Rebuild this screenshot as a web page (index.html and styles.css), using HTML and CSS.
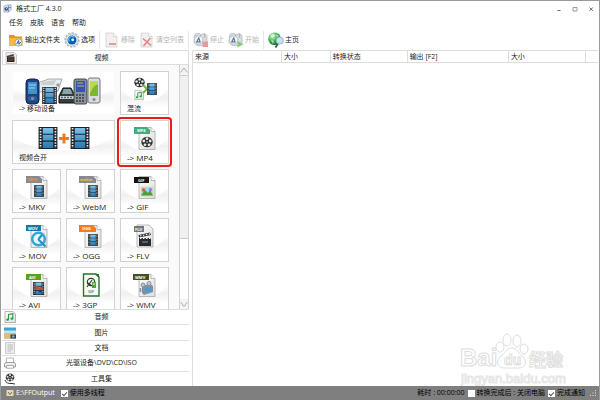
FILE: index.html
```html
<!DOCTYPE html>
<html lang="zh-CN">
<head>
<meta charset="utf-8">
<title>格式工厂 4.3.0</title>
<link rel="stylesheet" href="styles.css">
</head>
<body>
<svg class="defs" aria-hidden="true">
  <defs>
    <linearGradient id="blue" x1="0" y1="0" x2="0" y2="1"><stop offset="0" stop-color="#7cc4e8"/><stop offset="1" stop-color="#2478b4"/></linearGradient>
    <linearGradient id="paper" x1="0" y1="0" x2="1" y2="1"><stop offset="0" stop-color="#ffffff"/><stop offset="1" stop-color="#dcdcdc"/></linearGradient>
    <radialGradient id="globe" cx=".35" cy=".3" r=".8"><stop offset="0" stop-color="#d4f8d0"/><stop offset=".5" stop-color="#3cb04a"/><stop offset="1" stop-color="#0b6424"/></radialGradient>
    <symbol id="film" viewBox="0 0 18 21">
      <rect width="18" height="21" fill="#1c2226"/>
      <path d="M1.900 1V20M16.100 1V20" stroke="#e8eef2" stroke-width="1.600" stroke-dasharray="1.500 1.200"/>
      <path d="M4 1h10v5.500H4zM4 7.500h10v5.500H4zM4 14h10v6H4z" fill="url(#blue)"/>
    </symbol>
    <symbol id="page" viewBox="0 0 24 24">
      <path d="M6 1.500H18L22 5.500V23.500H6Z" fill="url(#paper)" stroke="#a8a8a8" stroke-width=".8"/>
      <path d="M18 1.500V5.500H22" fill="#fff" stroke="#a8a8a8" stroke-width=".8"/>
    </symbol>
    <symbol id="reel" viewBox="0 0 12 12">
      <ellipse cx="6" cy="6" rx="5.700" ry="5.300" fill="#2e3030"/>
      <g fill="#e4e6e6"><circle cx="6" cy="2.700" r="1.400"/><circle cx="9.200" cy="5" r="1.400"/><circle cx="8" cy="8.800" r="1.400"/><circle cx="4" cy="8.800" r="1.400"/><circle cx="2.800" cy="5" r="1.400"/></g>
      <circle cx="6" cy="6" r=".7" fill="#fff"/>
    </symbol>
    <symbol id="notes" viewBox="0 0 12 12">
      <path d="M1 .5H9L11.500 3V11.500H1Z" fill="url(#paper)" stroke="#9a9a9a" stroke-width=".7"/>
      <path d="M4.500 8.500V3.500L8.800 2.600V7.500" fill="none" stroke="#23a03a" stroke-width="1.100"/>
      <ellipse cx="3.600" cy="8.700" rx="1.400" ry="1.100" fill="#23a03a"/><ellipse cx="7.900" cy="7.700" rx="1.400" ry="1.100" fill="#23a03a"/>
    </symbol>
    <symbol id="factory" viewBox="0 0 16 16">
      <path d="M1.500 4L3 1.500H7L8 3L12.500 1.500L15 4V12L11 14.500H4L1 11Z" fill="#d3d8dd" stroke="#a0a8b0" stroke-width=".7"/>
      <path d="M8 3V7M3 3.500L4 5.500M12.500 2V6" fill="none" stroke="#7b858f" stroke-width=".8"/>
      <circle cx="6" cy="8.500" r="4.300" fill="#f2f5f8" stroke="#a4aeb8" stroke-width=".8"/>
      <path d="M6.500 5.500L4 10.500H7.500L6.500 7" fill="none" stroke="#3c5c86" stroke-width="1.300"/>
    </symbol>
  </defs>
</svg>

<header class="titlebar">
  <svg class="app-icon" viewBox="0 0 10 9"><path d="M1 2L4 .5H9V6L6.500 8.500H1Z" fill="#dce3ee" stroke="#8d98ad" stroke-width=".7"/><path d="M6 1V8M6 3.500H9" stroke="#56657f" stroke-width=".8"/><circle cx="3.600" cy="5" r="2" fill="#2b4c8c"/><circle cx="4" cy="4.700" r=".7" fill="#bcd8f8"/></svg>
  <h1>格式工厂 4.3.0</h1>
  <div class="window-buttons">
    <button aria-label="最小化"><svg viewBox="0 0 6 6"><path d="M1.500 4.500H4.500" stroke="#444" stroke-width=".8"/></svg></button>
    <button aria-label="最大化"><svg viewBox="0 0 6 6"><path d="M1 1.500H5V5H1Z" fill="none" stroke="#777" stroke-width=".7"/></svg></button>
    <button aria-label="关闭"><svg viewBox="0 0 6 6"><path d="M1.500 1.500L4.800 4.800M4.800 1.500L1.500 4.800" stroke="#444" stroke-width=".8"/></svg></button>
  </div>
</header>

<nav class="menu"><button>任务</button><button>皮肤</button><button>语言</button><button>帮助</button></nav>

<div class="toolbar">
  <button class="tool"><svg class="tool-icon" viewBox="0 0 16 16"><path d="M1 3H6L7.500 4.500H14V14H1Z" fill="#d89a1c"/><path d="M1 6H14.500V14H1Z" fill="#f5bb3c"/><circle cx="10.500" cy="10.500" r="3.600" fill="#e8edf2" stroke="#8998a8" stroke-width=".8"/><path d="M8.700 12L10.500 8.500L11 12.300L12.700 10" stroke="#35668c" fill="none"/></svg>输出文件夹</button>
  <button class="tool"><svg class="tool-icon" viewBox="0 0 16 16"><circle cx="8" cy="8" r="6.800" fill="#e7eaed" stroke="#b4bcc4" stroke-width="1.800" stroke-dasharray="2.200 1.300"/><circle cx="8" cy="8" r="6" fill="#eef1f4" stroke="#a2adb8" stroke-width=".5"/><circle cx="8" cy="8" r="4.500" fill="#075fb5"/><path d="M5.500 9.500A3 3 0 0 1 10 5.500" fill="none" stroke="#5ab4ee" stroke-width="1.300"/><circle cx="8.700" cy="7.800" r="1.400" fill="#fff"/></svg>选项</button>
  <span class="divider"></span>
  <button class="tool off" disabled><svg class="tool-icon" viewBox="0 0 16 16"><path d="M2 1H9.500L13 4.500V15H2Z" fill="#eee" stroke="#c8c8c8" stroke-width=".8"/><path d="M9.500 1V4.500H13" fill="#fff" stroke="#c8c8c8" stroke-width=".8"/><path d="M5 12H12" stroke="#dc7474" stroke-width="1.600"/></svg>移除</button>
  <button class="tool off" disabled><svg class="tool-icon" viewBox="0 0 16 16"><path d="M2 1H9.500L13 4.500V15H2Z" fill="#eee" stroke="#c8c8c8" stroke-width=".8"/><path d="M9.500 1V4.500H13" fill="#fff" stroke="#c8c8c8" stroke-width=".8"/><path d="M4 6.500L12 13.500M11.500 6L4.500 14" stroke="#dc6c6c" stroke-width="1.500"/></svg>清空列表</button>
  <span class="divider"></span>
  <button class="tool off" disabled><svg class="tool-icon" viewBox="0 0 16 16"><use href="#factory" width="15" height="15"/><path d="M9.500 9.500H15V15H9.500Z" fill="#e58a8a"/></svg>停止</button>
  <button class="tool off" disabled><svg class="tool-icon" viewBox="0 0 16 16"><use href="#factory" width="15" height="15"/><path d="M9.500 9L15.500 12.200L9.500 15.500Z" fill="#6cc65c"/></svg>开始</button>
  <span class="divider"></span>
  <button class="tool"><svg class="tool-icon" viewBox="0 0 16 16"><circle cx="6.500" cy="6.800" r="6.300" fill="url(#globe)"/><path d="M2.500 3L5 1.500L7 3L5.500 5L3.500 5.500ZM8 2L11 4L9 5ZM3 8L6 9L5 12Z" fill="#e6fae4" opacity=".7"/><path d="M10 11.500L7.500 15.500" stroke="#3a5a44" stroke-width="1.700"/><circle cx="11.800" cy="8.500" r="3.600" fill="#c2e3f5" stroke="#8caabd" stroke-width=".8"/></svg>主页</button>
</div>

<main class="workspace">
  <aside class="sidebar">
    <button class="section"><svg viewBox="0 0 12 12"><path d="M1 .5H9L11.500 3V11.500H1Z" fill="#eee" stroke="#aaa" stroke-width=".6"/><path d="M2 4.500H9.500V10H2Z" fill="#30241e"/><path d="M1.500 4L8.500 2L9 3.700L2 5.200Z" fill="#4b4039"/><path d="M3 6H8.500M3 8H8.500" stroke="#9b7965" stroke-width=".6"/></svg><span>视频</span></button>
    <div class="library">
      <div class="tiles">
        <button class="tile wide plain">
          <svg class="phones" viewBox="0 0 78 28">
            <path d="M12 6L24 2H37L33 14L13 15Z" fill="#e8eaed" stroke="#999" stroke-width=".8"/><path d="M17 5L31 3L29 8H16Z" fill="#c8ced2"/><circle cx="33" cy="8" r="1.800" fill="#9aa4aa"/>
            <rect x="1" y="2" width="13" height="25" rx="4" fill="#1c4383" stroke="#10264d"/><rect x="3" y="5" width="9" height="12" fill="#3f8fd0"/><path d="M4 8H11M4 11H10" stroke="#9bdcf2"/><path d="M4 13L9 15" stroke="#63b24c"/><rect x="3" y="19" width="9" height="5" rx="2" fill="#31588f"/><circle cx="7.500" cy="21.500" r="1.600" fill="#7790b8"/>
            <path d="M34 19L38 11H46L50 19V26H34Z" fill="#343c40" stroke="#111"/><path d="M38.500 12H45.500L47.500 17H37Z" fill="#87a5ab"/><path d="M35 19H49V22H35Z" fill="#ccd3d5"/><path d="M36 20.500H48" stroke="#61696e" stroke-width="1.500" stroke-dasharray="2 1"/>
            <rect x="49" y="2" width="13" height="25" rx="2" fill="#8a9198" stroke="#43474c"/><rect x="51" y="4" width="9" height="11" fill="#2f56b4"/><path d="M52 6H58M52 9H59" stroke="#e6ad54"/><path d="M51 18H60M51 21H60M51 24H60" stroke="#363c43" stroke-width="1.500" stroke-dasharray="2 1"/>
            <rect x="63" y="1" width="12" height="25" rx="2" fill="#d9dce0" stroke="#777"/><rect x="65" y="4" width="8" height="15" fill="#7fb530"/><path d="M65 16Q70 6 73 8V4H65Z" fill="#b6d957"/><circle cx="69" cy="22.500" r="1.600" fill="#858d94"/>
            <use href="#film" x="17" y="10" width="15" height="17"/>
          </svg>
          <span>-&gt; 移动设备</span>
        </button>
        <button class="tile"><svg class="format-icon" viewBox="0 0 24 24"><use href="#reel" x="1" y="0" width="11" height="11"/><use href="#notes" x="1" y="12" width="10" height="12"/><path d="M10 8L14 12M10 16L14 12M12 12H15" stroke="#72bb35" stroke-width="2" fill="none"/><use href="#film" x="14" y="6" width="10" height="12"/></svg><span>混流</span></button>
        <button class="tile wide"><svg class="merge-icon" viewBox="0 0 50 24"><use href="#film" x="-1" y="1" width="20" height="22"/><path d="M20 12.500H30M25 7.500V17.500" stroke="#ee7d20" stroke-width="3"/><use href="#film" x="31" y="1" width="20" height="22"/></svg><span>视频合开</span></button>
        <button class="tile format marked"><svg class="format-icon" viewBox="0 0 24 24"><use href="#page" width="24" height="24"/><path d="M1 1H14L17 4V8H1Z" fill="#46a982"/><text class="tag" x="4" y="6">MP4</text><use href="#reel" x="8" y="10" width="12" height="12"/></svg><span>-&gt; MP4</span></button>
        <button class="tile format"><svg class="format-icon" viewBox="0 0 24 24"><use href="#page" width="24" height="24"/><path d="M1 1H14L17 4V8H1Z" fill="#858b91"/><text class="tag orange" x="3" y="6">MKV</text><use href="#film" x="9" y="10" width="10" height="12"/></svg><span>-&gt; MKV</span></button>
        <button class="tile format"><svg class="format-icon" viewBox="0 0 24 24"><use href="#page" width="24" height="24"/><path d="M0 1H14L17 4V8H0Z" fill="#858b91"/><text class="tag yellow" x="1" y="6">webm</text><use href="#film" x="9" y="10" width="10" height="12"/></svg><span>-&gt; WebM</span></button>
        <button class="tile format"><svg class="format-icon" viewBox="0 0 24 24"><use href="#page" width="24" height="24"/><path d="M1 2H16V8H1Z" fill="#151515"/><text class="tag" x="5" y="7">GIF</text><path d="M8 12H20V21H8Z" fill="#9cd8f5" stroke="#e9d79a" stroke-width=".8"/><path d="M8 20.500L12 15L15 18L17 15L20 20.500Z" fill="#539d32"/><circle cx="10.500" cy="15" r="1.700" fill="#e65a30"/><circle cx="17.500" cy="14.500" r="1.500" fill="#7882dc"/></svg><span>-&gt; GIF</span></button>
        <button class="tile format"><svg class="format-icon" viewBox="0 0 24 24"><use href="#page" width="24" height="24"/><path d="M1 1H16V7H1Z" fill="#1677a8"/><text class="tag" x="3" y="6">MOV</text><circle cx="13.500" cy="15" r="6.300" fill="#e8f7fd" stroke="#38a5d4" stroke-width="2.500"/><path d="M13.500 15L17 11M13 15L20.500 22.500" stroke="#2293ca" stroke-width="2.200"/></svg><span>-&gt; MOV</span></button>
        <button class="tile format"><svg class="format-icon" viewBox="0 0 24 24"><use href="#page" width="24" height="24"/><path d="M0 1H14L17 4V8H0Z" fill="#f37b20"/><text class="tag" x="3" y="6">OGG</text><use href="#film" x="9" y="10" width="10" height="12"/></svg><span>-&gt; OGG</span></button>
        <button class="tile format"><svg class="format-icon" viewBox="0 0 24 24"><path d="M4 1H16L20 5V23H4Z" fill="url(#paper)" stroke="#a8a8a8" stroke-width=".8"/><path d="M1 2H11V8H1Z" fill="#71777b"/><text class="tag" x="2" y="7">FLV</text><path d="M6 14H18V22H6Z" fill="#272b2d"/><path d="M5.500 11L17 8.500L18 11L6 13.500Z" fill="#282b2d"/><path d="M7 12L17 9.800M7 14.500H18" stroke="#fff" stroke-width="1.200" stroke-dasharray="1.500 1.500"/><path d="M9 17H15V19H9Z" fill="#596167"/></svg><span>-&gt; FLV</span></button>
        <button class="tile format"><svg class="format-icon" viewBox="0 0 24 24"><use href="#page" width="24" height="24"/><path d="M1 1H16V7H1Z" fill="#58a51a"/><text class="tag" x="4" y="6">AVI</text><use href="#film" x="7" y="9" width="13" height="13"/><path d="M10 14L13 12L14 15L17 14V17L14 16L11 17Z" fill="#d0472c"/><circle cx="15" cy="18" r="1.500" fill="#1d3e68"/></svg><span>-&gt; AVI</span></button>
        <button class="tile format"><svg class="format-icon" viewBox="0 0 24 24"><path d="M4.500 1H17L20 4V23H4.500Z" fill="#f4faf4" stroke="#24762d" stroke-width="1.400"/><path d="M16 1L20 5V1Z" fill="#24762d"/><circle cx="12" cy="9" r="3.700" fill="none" stroke="#2b3e30" stroke-width="1.200"/><path d="M8 14L13 7M9 10L13 13" fill="none" stroke="#2b3e30" stroke-width="1.200"/><rect x="13" y="9" width="4" height="6" fill="#5aa044"/><circle cx="15" cy="11" r="1" fill="#cce778"/><text class="tag small" x="9" y="20">3GP</text></svg><span>-&gt; 3GP</span></button>
        <button class="tile format"><svg class="format-icon" viewBox="0 0 24 24"><use href="#page" width="24" height="24"/><path d="M0 1H16V7H0Z" fill="#46501c"/><text class="tag" x="2" y="6">WMV</text><path d="M9 13L17 11L20 13V19L11 22L9 20Z" fill="#8290a0"/><circle cx="10" cy="12" r="2" fill="#b8c3cc" stroke="#85929e"/><circle cx="16" cy="10.500" r="2" fill="#c6ced4" stroke="#85929e"/><path d="M12 15L18 14V18L12 19Z" fill="#4b9ad4"/><path d="M7.500 15V19" stroke="#8290a0" stroke-width="1.600"/></svg><span>-&gt; WMV</span></button>
      </div>
      <div class="scrollbar">
        <button aria-label="向上滚动"><svg viewBox="0 0 8 10"><path d="M.5 7.500L4 3L7.500 7.500" fill="none" stroke="#999" stroke-width=".8"/></svg></button>
        <div class="track"><div class="thumb"></div></div>
        <button aria-label="向下滚动"><svg viewBox="0 0 8 10"><path d="M.5 3L4 7.500L7.500 3" fill="none" stroke="#999" stroke-width=".8"/></svg></button>
      </div>
    </div>
    <div class="sections">
      <button class="section"><svg viewBox="0 0 12 12"><use href="#notes" width="12" height="12"/></svg><span>音频</span></button>
      <button class="section"><svg viewBox="0 0 12 12"><path d="M0 .5H12V11.500H0Z" fill="#3fa4dc"/><path d="M0 3.500H12V6H0Z" fill="#bfe4f4"/><path d="M0 6H12V11.500H0Z" fill="#dfbc7c"/><path d="M6.500 7.500H12V11.500H6.500Z" fill="#30434f"/><circle cx="9.200" cy="9.500" r="1.300" fill="#92aab5"/></svg><span>图片</span></button>
      <button class="section"><svg viewBox="0 0 12 12"><path d="M1.500 .5H10.500V11.500H1.500Z" fill="#ececec" stroke="#b2b2b2" stroke-width=".6"/><path d="M3.500 3H9M3.500 5H9M3.500 7H9M3.500 9H7" stroke="#aaa" stroke-width=".7"/></svg><span>文档</span></button>
      <button class="section"><svg viewBox="0 0 12 12"><path d="M2.500 6V1H9.500V6" fill="#fff" stroke="#999" stroke-width=".7"/><path d="M1.500 5.500H10.500L11.500 7V10H.5V7Z" fill="#eee" stroke="#888" stroke-width=".8"/><path d="M2.500 8.500H9.500V11.200H2.500Z" fill="#fff" stroke="#888" stroke-width=".7"/></svg><span>光驱设备\DVD\CD\ISO</span></button>
      <button class="section"><svg viewBox="0 0 12 12"><use href="#reel" x="1" y="0" width="10" height="9"/><path d="M1 7Q2 11 8 10.500L11 11" fill="none" stroke="#333"/></svg><span>工具集</span></button>
    </div>
  </aside>

  <section class="jobs">
    <table>
      <colgroup><col class="col-source"><col class="col-size"><col class="col-state"><col class="col-output"><col class="col-result"><col></colgroup>
      <thead><tr><th>来源</th><th>大小</th><th>转换状态</th><th>输出 [F2]</th><th>大小</th><th></th></tr></thead>
      <tbody></tbody>
    </table>
    <svg class="watermark" viewBox="0 0 112 56">
      <text class="wm-brand" x="1" y="36">Bai</text>
      <ellipse cx="41" cy="17" rx="4" ry="5"/><ellipse cx="48" cy="10" rx="4" ry="6"/><ellipse cx="58" cy="11" rx="4" ry="6"/><ellipse cx="65" cy="19" rx="4" ry="5"/><path d="M53 18C58 18 60 24 64 27C69 32 66 38 60 38H45C39 38 36 32 41 27C46 23 48 18 53 18Z"/>
      <text class="wm-du" x="45" y="35">du</text>
      <text class="wm-cn" x="70" y="36">经验</text>
      <text class="wm-url" x="2" y="53">jingyan.baidu.com</text>
    </svg>
  </section>
</main>

<footer class="status">
  <button class="path"><svg viewBox="0 0 8 8"><path d="M.5 1H7.500V7H.5Z" fill="#ecd8a4"/><path d="M2 3L4 5.500L6 3" fill="none" stroke="#5d6e89"/></svg>E:\FFOutput</button>
  <label><input type="checkbox" checked>使用多线程</label>
  <div class="status-end">
    <span>耗时 : 00:00:00</span>
    <label><input type="checkbox">转换完成后 : 关闭电脑</label>
    <label><input type="checkbox" checked>完成通知</label>
    <svg class="grip" viewBox="0 0 7 7"><path d="M5 0H6V1H5ZM5 2.500H6V3.500H5ZM5 5H6V6H5ZM2.500 2.500H3.500V3.500H2.500ZM2.500 5H3.500V6H2.500ZM0 5H1V6H0Z" fill="#ddd"/></svg>
  </div>
</footer>
</body>
</html>
```
FILE: styles.css
```css
* { box-sizing: border-box; }

body {
  margin: 0;
  height: 100vh;
  display: flex;
  flex-direction: column;
  overflow: hidden;
  border: 1px solid #9a9a9a;
  border-bottom: 0;
  background: #fff;
  color: #1c1c1c;
  font: 7px/10px "Open Sans", "Noto Sans CJK SC", sans-serif;
}

button {
  margin: 0;
  padding: 0;
  border: 0;
  background: none;
  color: inherit;
  font: inherit;
}

svg { display: block; flex: none; }
.defs { position: absolute; width: 0; height: 0; }

.titlebar {
  flex: none;
  display: flex;
  align-items: center;
  height: 15px;
  padding: 0 5px 0 2px;
}
.titlebar h1 { margin: 0 0 0 4px; font: inherit; }
.app-icon { width: 9px; height: 9px; }
.window-buttons { display: flex; gap: 10px; margin-left: auto; }
.window-buttons svg { width: 6px; height: 6px; }

.menu {
  flex: none;
  display: flex;
  align-items: center;
  gap: 7px;
  height: 13px;
  padding-left: 8px;
}

.toolbar {
  flex: none;
  display: flex;
  align-items: center;
  gap: 4px;
  height: 21px;
  padding-left: 7px;
}
.tool { display: flex; align-items: center; gap: 1px; white-space: nowrap; }
.tool-icon { width: 16px; height: 16px; }
.off { color: #b4b4b4; }
.off .tool-icon { opacity: .85; }
.divider { width: 1px; height: 18px; background: #e8e8e8; }

.workspace { flex: 1; min-height: 0; display: flex; gap: 3px; padding: 0 1px; }

.sidebar {
  flex: none;
  width: 187px;
  display: flex;
  flex-direction: column;
}
.section {
  flex: none;
  display: flex;
  align-items: center;
  width: 100%;
  height: 15px;
  padding: 0 2px;
  border: 1px solid #ddd;
  background: #fff;
}
.section svg { width: 12px; height: 12px; }
.section span { flex: 1; text-align: center; }
.sections {
  flex: none;
  height: 77px;
  display: grid;
  grid-template-rows: repeat(5, 1fr);
}
.sections .section { height: auto; border-width: 1px 0 0; }

.library {
  flex: 1;
  min-height: 0;
  display: flex;
  justify-content: space-between;
  overflow: hidden;
  background: #fafafa;
}
.tiles {
  display: grid;
  grid-template-columns: repeat(3, 49px);
  grid-auto-rows: 44px;
  gap: 5px;
  padding: 6px 0 0 10px;
}
.tile {
  display: flex;
  flex-direction: column;
  align-items: center;
  gap: 3px;
  padding-top: 5px;
  border: 1px solid #d2d2d2;
  background:
    radial-gradient(ellipse 60% 30px at 50% 0, #fff 96%, transparent),
    linear-gradient(#fff 40%, #f0f0f0 60%, #fff 85%);
}
.tile span { align-self: stretch; padding-left: 6px; text-align: left; white-space: nowrap; }
.wide { grid-column: span 2; }
.plain { border-color: #fafafa; }
.format { font-size: 8px; }
.format-icon { width: 24px; height: 24px; }
.merge-icon { width: 50px; height: 24px; overflow: visible; }
.phones { width: 78px; height: 28px; margin-bottom: -4px; }
.marked { outline: 2px solid #f01818; outline-offset: 1px; border-radius: 1px; }

.tag { font: bold 4px "Open Sans", sans-serif; fill: #fff; }
.tag.orange { fill: #ff8a38; }
.tag.yellow { fill: #ffc02c; }
.tag.small { font-size: 3px; fill: #777; }

.scrollbar { width: 10px; display: flex; flex-direction: column; background: #fff; border: solid #d4d4d4; border-width: 0 1px; }
.scrollbar svg { width: 8px; height: 10px; }
.scrollbar button { background: #f4f4f4; }
.track { flex: 1; }
.thumb { height: 73%; background: #f0f0f0; border: solid #ccc; border-width: 1px 0; }

.jobs {
  flex: 1;
  min-width: 0;
  position: relative;
  border-left: 1px solid #ddd;
}
table { width: 100%; table-layout: fixed; border-collapse: separate; border-spacing: 0; }
th {
  height: 13px;
  padding: 0 2px;
  border: solid #ddd;
  border-width: 1px 1px 1px 0;
  font-weight: normal;
  text-align: left;
  white-space: nowrap;
}
th:last-child { border-right: 0; }
.col-source { width: 22%; }
.col-size { width: 12%; }
.col-state { width: 19%; }
.col-output { width: 25%; }
.col-result { width: 19%; }

.watermark { position: absolute; right: 27px; bottom: 0; width: 112px; height: 56px; fill: #fff; stroke: #dedede; stroke-width: 1px; }
.watermark text { font-family: "Liberation Sans", "Noto Sans CJK SC", sans-serif; font-weight: bold; }
.wm-brand { font-size: 24px; }
.wm-du { font-size: 14px; }
.wm-cn { font-size: 17px; }
.watermark .wm-url { font-size: 13px; font-weight: normal; stroke: #e6e6e6; }

.status {
  flex: none;
  display: flex;
  align-items: center;
  gap: 6px;
  height: 14px;
  padding: 0 2px 0 5px;
  background: #7f7f7f;
  color: #000;
}
.path { display: flex; align-items: center; gap: 2px; color: #fff; }
.path svg { width: 8px; height: 8px; }
.status label { display: flex; align-items: center; gap: 2px; }
.status-end { display: flex; align-items: center; gap: 3px; margin-left: auto; }
.grip { width: 7px; height: 7px; margin-left: 2px; }
input {
  appearance: none;
  width: 7px;
  height: 7px;
  margin: 0;
  display: grid;
  place-items: center;
  background: #fff;
}
input:checked::before {
  content: "";
  width: 4px;
  height: 2px;
  border: solid #555;
  border-width: 0 0 1px 1px;
  transform: rotate(-45deg);
}
```
